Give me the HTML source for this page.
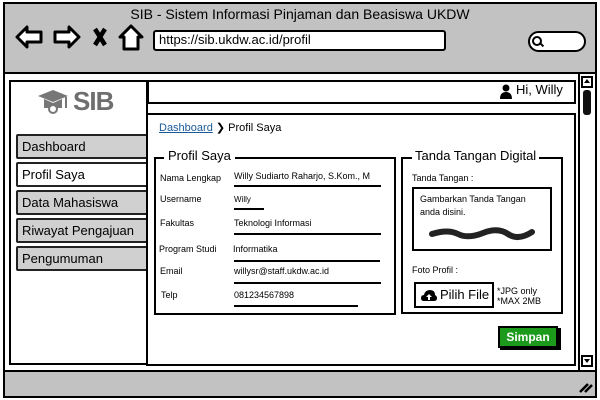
<!DOCTYPE html>
<html><head><style>
*{box-sizing:border-box;margin:0;padding:0}
body{width:600px;height:400px;background:#fff;position:relative;overflow:hidden;font-family:"Comic Sans MS","Liberation Sans",sans-serif;color:#000}
.a{position:absolute}
.b{border:2px solid #000}
.t{font-size:13px;white-space:nowrap}
.s{font-size:9px;white-space:nowrap}
.m{background:#d0d0d0;border:2px solid #222;border-radius:2px;font-size:13px;padding:3px 4px;height:25px;width:132px;left:16px}
.ln{height:2px;background:#000}
</style></head><body>
<div class="a b" style="left:3px;top:2px;width:594px;height:396px;background:#c2c2c2;border-width:2px"></div>
<div class="a t" style="left:0;width:600px;top:6px;text-align:center;font-size:14px">SIB - Sistem Informasi Pinjaman dan Beasiswa UKDW</div>
<svg class="a" style="left:14px;top:22px" width="130" height="30" viewBox="0 0 130 30">
<path d="M3 15 L13 5 L13 10 L27 10 L27 20 L13 20 L13 25 Z" fill="#fff" stroke="#000" stroke-width="3" stroke-linejoin="round"/>
<path d="M65 15 L55 5 L55 10 L41 10 L41 20 L55 20 L55 25 Z" fill="#fff" stroke="#000" stroke-width="3" stroke-linejoin="round"/>
<path d="M81 7 L91 23 M91 7 L81 23" stroke="#000" stroke-width="4.5"/>
<path d="M106 15 L117 4 L128 15 L124 15 L124 27 L110 27 L110 15 Z" fill="#fff" stroke="#000" stroke-width="3" stroke-linejoin="round"/>
</svg>
<div class="a b" style="left:153px;top:30px;width:293px;height:21px;background:#fff;border-radius:3px"></div>
<div class="a t" style="left:159px;top:32px;font-size:13px">https://sib.ukdw.ac.id/profil</div>
<div class="a b" style="left:528px;top:31px;width:58px;height:21px;background:#fff;border-radius:11px"></div>
<div class="a" style="left:532px;top:36px;width:10px;height:10px;border:2px solid #000;border-radius:50%"></div>
<div class="a" style="left:540px;top:44px;width:4px;height:2px;background:#000;transform:rotate(45deg)"></div>
<div class="a" style="left:5px;top:72px;width:590px;height:2px;background:#000"></div>
<div class="a" style="left:5px;top:74px;width:590px;height:296px;background:#fff"></div>
<div class="a" style="left:5px;top:370px;width:590px;height:2px;background:#000"></div>
<div class="a" style="left:578px;top:74px;width:2px;height:296px;background:#000"></div>
<div class="a b" style="left:581px;top:76px;width:12px;height:12px;background:#fff"></div>
<div class="a" style="left:584px;top:79px;border-left:3px solid transparent;border-right:3px solid transparent;border-bottom:4px solid #000"></div>
<div class="a" style="left:583px;top:90px;width:8px;height:25px;background:#111;border-radius:3px"></div>
<div class="a b" style="left:581px;top:355px;width:12px;height:12px;background:#fff"></div>
<div class="a" style="left:584px;top:359px;border-left:3px solid transparent;border-right:3px solid transparent;border-top:4px solid #000"></div>
<svg class="a" style="left:578px;top:378px" width="16" height="16"><path d="M2 14 L10 6 M7 14 L14 7" stroke="#000" stroke-width="2.5"/></svg>
<div class="a b" style="left:9px;top:80px;width:139px;height:285px;background:#fff"></div>
<svg class="a" style="left:36px;top:88px" width="36" height="28" viewBox="0 0 36 28">
<path d="M2 8 L17 2 L32 8 L17 14 Z" fill="#777"/><path d="M8 11 L8 20 L26 20 L26 11 L17 15 Z" fill="#777"/><circle cx="17" cy="21" r="4" fill="#fff" stroke="#777" stroke-width="2"/><path d="M30 9 L30 20" stroke="#777" stroke-width="2"/>
</svg>
<div class="a" style="left:73px;top:86px;font-size:26px;font-weight:bold;color:#6f6f6f;font-family:'Liberation Sans',sans-serif;letter-spacing:-1px">SIB</div>
<div class="a m" style="top:134px">Dashboard</div>
<div class="a m" style="top:162px;background:#fff">Profil Saya</div>
<div class="a m" style="top:190px">Data Mahasiswa</div>
<div class="a m" style="top:218px">Riwayat Pengajuan</div>
<div class="a m" style="top:246px">Pengumuman</div>
<div class="a b" style="left:147px;top:80px;width:429px;height:24px;background:#fff"></div>
<svg class="a" style="left:500px;top:84px" width="12" height="15"><circle cx="6" cy="4" r="3.5" fill="#000"/><path d="M0 15 Q0 8 6 8 Q12 8 12 15Z" fill="#000"/></svg>
<div class="a t" style="left:516px;top:82px;font-size:13px">Hi, Willy</div>
<div class="a b" style="left:146px;top:113px;width:430px;height:253px;background:#fff"></div>
<div class="a" style="left:159px;top:121px;font-size:11px"><span style="color:#1a5a9a;text-decoration:underline">Dashboard</span> ❯ Profil Saya</div>
<div class="a b" style="left:154px;top:157px;width:242px;height:158px"></div>
<div class="a t" style="left:164px;top:148px;background:#fff;padding:0 4px;font-size:13px">Profil Saya</div>
<div class="a s" style="left:160px;top:173px">Nama Lengkap</div><div class="a s" style="left:234px;top:171px">Willy Sudiarto Raharjo, S.Kom., M</div><div class="a ln" style="left:234px;top:185px;width:147px"></div>
<div class="a s" style="left:160px;top:194px">Username</div><div class="a s" style="left:234px;top:195px;font-size:8px">Willy</div><div class="a ln" style="left:234px;top:208px;width:30px"></div>
<div class="a s" style="left:160px;top:218px">Fakultas</div><div class="a s" style="left:234px;top:218px">Teknologi Informasi</div><div class="a ln" style="left:234px;top:233px;width:147px"></div>
<div class="a s" style="left:159px;top:244px">Program Studi</div><div class="a s" style="left:233px;top:244px">Informatika</div><div class="a ln" style="left:234px;top:260px;width:146px"></div>
<div class="a s" style="left:160px;top:266px">Email</div><div class="a s" style="left:234px;top:266px">willysr@staff.ukdw.ac.id</div><div class="a ln" style="left:234px;top:282px;width:147px"></div>
<div class="a s" style="left:161px;top:290px">Telp</div><div class="a s" style="left:234px;top:290px">081234567898</div><div class="a ln" style="left:234px;top:305px;width:124px"></div>
<div class="a b" style="left:401px;top:157px;width:162px;height:157px"></div>
<div class="a t" style="left:412px;top:148px;background:#fff;padding:0 3px;font-size:13px">Tanda Tangan Digital</div>
<div class="a s" style="left:412px;top:173px">Tanda Tangan :</div>
<div class="a b" style="left:412px;top:187px;width:140px;height:64px"></div>
<div class="a s" style="left:420px;top:193px;line-height:13px">Gambarkan Tanda Tangan<br>anda disini.</div>
<svg class="a" style="left:428px;top:225px" width="110" height="16"><path d="M4 9 Q20 4 30 9 T55 8 T80 9 T104 7" stroke="#222" stroke-width="6" fill="none" stroke-linecap="round"/></svg>
<div class="a s" style="left:412px;top:265px">Foto Profil :</div>
<div class="a b" style="left:414px;top:282px;width:80px;height:26px;background:#fff"></div>
<svg class="a" style="left:421px;top:289px" width="16" height="13"><path d="M3 12 Q0 12 0 9 Q0 6 3 6 Q4 1 9 1 Q14 1 14 6 Q16 7 16 9 Q16 12 13 12Z" fill="#000"/><path d="M8 5 L5 8 L7 8 L7 11 L9 11 L9 8 L11 8Z" fill="#fff"/></svg>
<div class="a t" style="left:440px;top:287px;font-size:13px">Pilih File</div>
<div class="a s" style="left:497px;top:286px;line-height:10px">*JPG only<br>*MAX 2MB</div>
<div class="a" style="left:500px;top:328px;width:61px;height:22px;background:#000"></div>
<div class="a" style="left:498px;top:326px;width:60px;height:22px;background:#1c9a1c;border:2px solid #000;color:#fff;font-size:12px;font-weight:bold;text-align:center;line-height:18px">Simpan</div>
</body></html>
